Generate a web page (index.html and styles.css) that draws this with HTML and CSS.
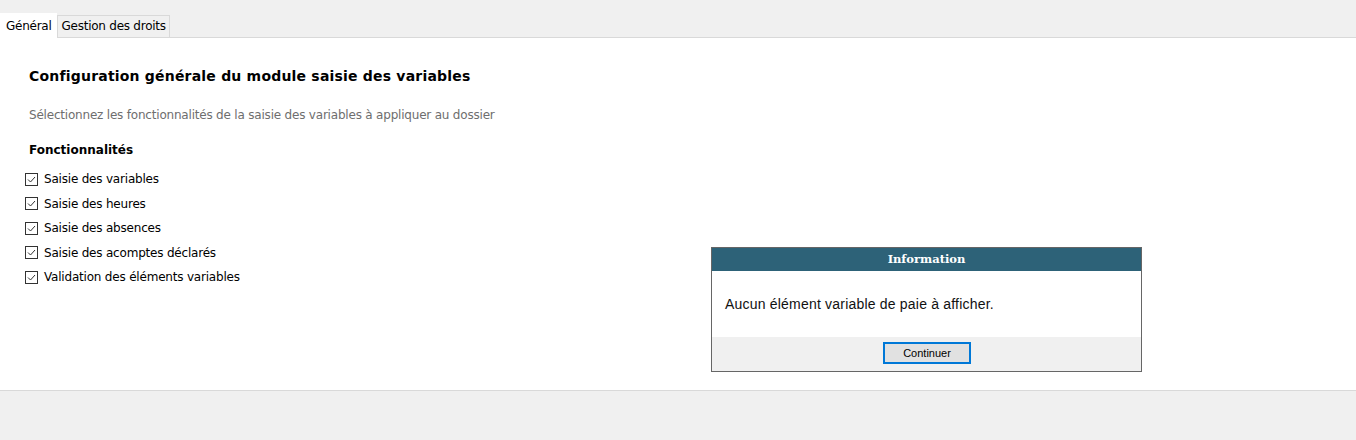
FILE: index.html
```html
<!DOCTYPE html>
<html lang="fr">
<head>
<meta charset="utf-8">
<link rel="stylesheet" href="styles.css">
</head>
<body>
<div class="tabs">
  <div class="tab active">Général</div>
  <div class="tab">Gestion des droits</div>
</div>
<div class="content">
  <h1 class="title">Configuration générale du module saisie des variables</h1>
  <p class="subtitle">Sélectionnez les fonctionnalités de la saisie des variables à appliquer au dossier</p>
  <h2 class="section">Fonctionnalités</h2>
  <ul class="checks">
    <li><span class="box"><svg width="11" height="11" viewBox="0 0 11 11"><path d="M2 5.5 L4.5 8 L9 3" fill="none" stroke="#333" stroke-width="1"/></svg></span>Saisie des variables</li>
    <li><span class="box"><svg width="11" height="11" viewBox="0 0 11 11"><path d="M2 5.5 L4.5 8 L9 3" fill="none" stroke="#333" stroke-width="1"/></svg></span>Saisie des heures</li>
    <li><span class="box"><svg width="11" height="11" viewBox="0 0 11 11"><path d="M2 5.5 L4.5 8 L9 3" fill="none" stroke="#333" stroke-width="1"/></svg></span>Saisie des absences</li>
    <li><span class="box"><svg width="11" height="11" viewBox="0 0 11 11"><path d="M2 5.5 L4.5 8 L9 3" fill="none" stroke="#333" stroke-width="1"/></svg></span>Saisie des acomptes déclarés</li>
    <li><span class="box"><svg width="11" height="11" viewBox="0 0 11 11"><path d="M2 5.5 L4.5 8 L9 3" fill="none" stroke="#333" stroke-width="1"/></svg></span>Validation des éléments variables</li>
  </ul>
  <div class="dialog">
    <div class="dlg-head">Information</div>
    <div class="dlg-body">Aucun élément variable de paie à afficher.</div>
    <div class="dlg-foot"><button class="btn">Continuer</button></div>
  </div>
</div>
<div class="bottom"></div>
</body>
</html>
```
FILE: styles.css
```css
* { box-sizing: border-box; }
html, body { margin: 0; padding: 0; }
body {
  width: 1356px;
  height: 440px;
  background: #f0f0f0;
  font-family: "DejaVu Sans", Verdana, sans-serif;
  color: #000;
  overflow: hidden;
}
.tabs {
  height: 38px;
  display: flex;
  align-items: flex-end;
  padding-left: 0;
  border-bottom: 1px solid #d9d9d9;
}
.tab {
  font-size: 12px;
  height: 22px;
  line-height: 21px;
  padding: 0 3px 0 4px;
  border: 1px solid #d9d9d9;
  border-bottom: none;
  background: #f0f0f0;
  letter-spacing: -0.25px;
}
.tab.active {
  background: #fff;
  height: 25px;
  line-height: 25px;
  border-color: #fff;
  position: relative;
  top: 1px;
  padding: 0 4px 0 5px;
}
.content {
  position: relative;
  background: #fff;
  height: 353px;
  padding: 28px 29px 0;
  border-bottom: 1px solid #d9d9d9;
}
.title {
  margin: 0;
  font-size: 14px;
  font-weight: bold;
  line-height: 20px;
  letter-spacing: 0.2px;
}
.subtitle {
  margin: 21px 0 0;
  color: #6e6e6e;
  font-size: 12px;
  line-height: 16px;
  letter-spacing: -0.2px;
}
.section {
  margin: 19px 0 0;
  font-size: 12px;
  font-weight: bold;
  line-height: 16px;
  letter-spacing: 0;
}
.checks {
  list-style: none;
  margin: 9px 0 0 -4px;
  padding: 0;
}
.checks li {
  display: flex;
  align-items: center;
  height: 24.5px;
  font-size: 12px;
  letter-spacing: -0.2px;
}
.box {
  width: 13px;
  height: 13px;
  border: 1px solid #333;
  margin-right: 6px;
  display: flex;
  align-items: center;
  justify-content: center;
}
.box svg { display: block; }
.dialog {
  position: absolute;
  left: 711px;
  top: 209px;
  width: 431px;
  height: 125px;
  border: 1px solid #666;
  background: #fff;
  display: flex;
  flex-direction: column;
  font-family: "Liberation Sans", Arial, sans-serif;
}
.dlg-head {
  height: 23px;
  background: #2d6278;
  color: #fff;
  font-family: "DejaVu Serif", Georgia, serif;
  font-weight: bold;
  font-size: 11.5px;
  line-height: 23px;
  text-align: center;
}
.dlg-body {
  height: 66px;
  padding-left: 13px;
  font-size: 14px;
  line-height: 66px;
  color: #111;
  letter-spacing: 0.2px;
}
.dlg-foot {
  flex: 1;
  background: #f0f0f0;
  display: flex;
  justify-content: center;
  align-items: flex-start;
  padding-top: 5px;
}
.btn {
  width: 88px;
  height: 22px;
  border: 2px solid #0078d7;
  background: #e1e1e1;
  font-family: "Liberation Sans", Arial, sans-serif;
  font-size: 11px;
  color: #000;
  padding: 0;
  margin-left: 1px;
}
.bottom { height: 49px; }
```
